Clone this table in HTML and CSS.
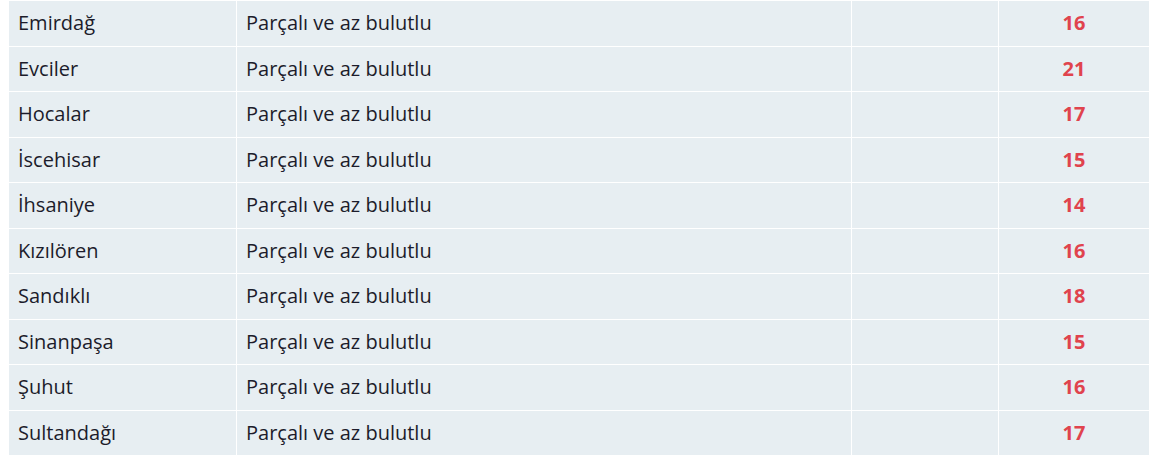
FILE: index.html
```html
<!DOCTYPE html>
<html lang="tr">
<head>
  <meta charset="UTF-8" />
  <meta name="viewport" content="width=device-width, initial-scale=1.0" />
  <title>Hava Durumu - İlçeler</title>
  <link rel="stylesheet" href="styles.css">
</head>
<body>
  <table class="weather-table">
    <colgroup>
      <col class="col-town">
      <col class="col-desc">
      <col class="col-empty">
      <col class="col-temp">
    </colgroup>
    <tbody>
      <tr><td>Emirdağ</td><td>Parçalı ve az bulutlu</td><td></td><td class="temp">16</td></tr>
      <tr><td>Evciler</td><td>Parçalı ve az bulutlu</td><td></td><td class="temp">21</td></tr>
      <tr><td>Hocalar</td><td>Parçalı ve az bulutlu</td><td></td><td class="temp">17</td></tr>
      <tr><td>İscehisar</td><td>Parçalı ve az bulutlu</td><td></td><td class="temp">15</td></tr>
      <tr><td>İhsaniye</td><td>Parçalı ve az bulutlu</td><td></td><td class="temp">14</td></tr>
      <tr><td>Kızılören</td><td>Parçalı ve az bulutlu</td><td></td><td class="temp">16</td></tr>
      <tr><td>Sandıklı</td><td>Parçalı ve az bulutlu</td><td></td><td class="temp">18</td></tr>
      <tr><td>Sinanpaşa</td><td>Parçalı ve az bulutlu</td><td></td><td class="temp">15</td></tr>
      <tr><td>Şuhut</td><td>Parçalı ve az bulutlu</td><td></td><td class="temp">16</td></tr>
      <tr><td>Sultandağı</td><td>Parçalı ve az bulutlu</td><td></td><td class="temp">17</td></tr>
    </tbody>
  </table>
</body>
</html>
```

FILE: styles.css
```css
body {
  margin: 0 0 0 8px;
  background: #ffffff;
  font-family: "Open Sans", Arial, sans-serif;
  color: #1c1c2b;
}
.weather-table {
  width: 1141px;
  border-collapse: collapse;
  table-layout: fixed;
  background: #e7eef2;
  font-size: 20px;
  line-height: 26.5px;
}
.col-town { width: 228px; }
.col-desc { width: 615px; }
.col-empty { width: 147px; }
.col-temp { width: 151px; }
.weather-table td {
  border: 1px solid #ffffff;
  padding: 9px 9px;
  text-align: left;
}
.weather-table td.temp {
  text-align: center;
  font-weight: bold;
  color: #e0434d;
}
```
